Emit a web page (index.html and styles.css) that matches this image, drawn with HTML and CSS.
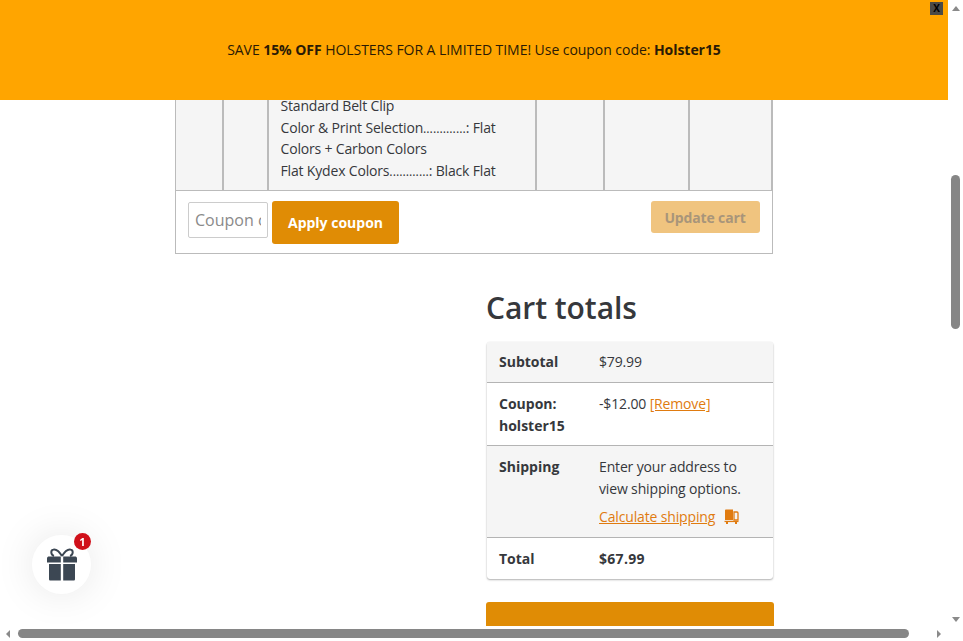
FILE: index.html
```html
<!DOCTYPE html>
<html lang="en">
<head>
    <meta charset="UTF-8">
    <meta name="viewport" content="width=device-width, initial-scale=1.0">
    <title>Cart</title>
    <link rel="stylesheet" href="styles.css">
</head>
<body>
    <div class="window">
        <div class="page">
            <main class="cart">
                <table class="cart-table">
                    <tr class="item-row">
                        <td class="cell-a"></td>
                        <td class="cell-b"></td>
                        <td class="cell-desc">
                            Standard Belt Clip<br>
                            Color &amp; Print Selection<span class="dots">.............</span>: Flat<br>
                            Colors + Carbon Colors<br>
                            Flat Kydex Colors<span class="dots">............</span>: Black Flat
                        </td>
                        <td class="cell-c"></td>
                        <td class="cell-d"></td>
                        <td class="cell-e"></td>
                    </tr>
                    <tr>
                        <td colspan="6" class="actions">
                            <div class="actions-row">
                                <div class="coupon">
                                    <input type="text" class="coupon-input" placeholder="Coupon code">
                                    <button class="button apply-button">Apply coupon</button>
                                </div>
                                <button class="button update-button">Update cart</button>
                            </div>
                        </td>
                    </tr>
                </table>

                <section class="totals">
                    <h2>Cart totals</h2>
                    <table class="totals-table">
                        <tr class="shaded first-row">
                            <th>Subtotal</th>
                            <td>$79.99</td>
                        </tr>
                        <tr>
                            <th>Coupon: holster15</th>
                            <td>-$12.00 <a href="#">[Remove]</a></td>
                        </tr>
                        <tr class="shaded">
                            <th>Shipping</th>
                            <td>
                                <p>Enter your address to view shipping options.</p>
                                <a href="#" class="calc-link">Calculate shipping</a>
                                <svg class="truck" width="15" height="15" viewBox="0 0 15 15">
                                    <path d="M1 1.500C1 .8 1.500.5 2 .5h7v10.500H1z" fill="#e07b10"/>
                                    <path d="M10 3h3c.6 0 1 .4 1 1v7h-4z" fill="none" stroke="#e07b10" stroke-width="1.300"/>
                                    <path d="M.5 11.800h14v1.300H.5z" fill="#e07b10"/>
                                    <path d="M2 13.100h2V15H2zM11 13.100h2V15h-2z" fill="#e07b10"/>
                                </svg>
                            </td>
                        </tr>
                        <tr>
                            <th>Total</th>
                            <td><strong>$67.99</strong></td>
                        </tr>
                    </table>
                    <a href="#" class="button checkout-button">Proceed to checkout</a>
                </section>
            </main>
        </div>

        <div class="scroll-y">
            <span class="arrow arrow-up"></span>
            <div class="scroll-y-track"><div class="scroll-y-thumb"></div></div>
            <span class="arrow arrow-down"></span>
        </div>
        <div class="scroll-x">
            <span class="arrow arrow-left"></span>
            <div class="scroll-x-track"><div class="scroll-x-thumb"></div></div>
            <span class="arrow arrow-right"></span>
        </div>
        <div class="scroll-corner"></div>
    </div>

    <div class="notice">
        <p>SAVE <b>15% OFF</b> HOLSTERS FOR A LIMITED TIME! Use coupon code: <b>Holster15</b></p>
        <button class="notice-close">X</button>
    </div>

    <div class="gift">
        <svg width="30" height="33" viewBox="0 0 30 33">
            <path d="M15 8C12 3 9 1 6.500 1.500 3.500 2 3.500 7 7 8M15 8c3-5 6-7 8.500-6.500 3 .5 3 5.500-.5 6.500" fill="none" stroke="#3c4753" stroke-width="2"/>
            <path d="M0 10.500C0 9 1 8.500 2 8.500h11.800v6H0zM16.200 8.500H28c1 0 2 .5 2 2v4H16.200z" fill="#3c4753"/>
            <path d="M2 16h11.800v16.500H3.500C2.500 32.500 2 32 2 31zM16.200 16H28v15c0 1-.5 1.500-1.500 1.500H16.200z" fill="#3c4753"/>
        </svg>
        <span class="gift-badge">1</span>
    </div>
</body>
</html>
```

FILE: styles.css
```css
* {
    box-sizing: border-box;
}

html, body {
    height: 100%;
}

body {
    margin: 0;
    overflow: hidden;
    background-color: #fff;
    color: #36383c;
    font-family: "Open Sans", "Noto Sans", sans-serif;
    font-size: 14px;
    line-height: 21.6px;
}

.window {
    display: grid;
    grid-template-columns: 948px 15px;
    grid-template-rows: 626px 15px;
    height: 100%;
}

.page {
    overflow: hidden;
}

.cart {
    width: 598px;
    margin: 0 auto;
    padding-top: 94px;
}

/* cart table */
.cart-table {
    width: 100%;
    border-collapse: collapse;
    border: 1px solid #bbb;
    table-layout: fixed;
}

.cart-table td {
    padding: 0;
    border: 1px solid #bbb;
}

.item-row td {
    background-color: #f5f5f5;
    border-top: none;
    border-right-width: 2px;
    vertical-align: top;
}

.cell-a { width: 47px; }
.cell-b { width: 45px; }
.cell-c { width: 68px; }
.cell-d { width: 85px; }
.cell-e { width: 83px; }

.item-row .cell-desc {
    padding: 0 12px 9px 12px;
    letter-spacing: -0.17px;
}

.dots {
    font-size: 12.5px;
    line-height: 1;
    letter-spacing: 0;
}

.actions {
    padding: 10px 12px 9px !important;
}

.actions-row {
    display: flex;
    justify-content: space-between;
    align-items: flex-start;
}

.coupon {
    display: flex;
    align-items: flex-start;
    gap: 4px;
}

.coupon-input {
    width: 80px;
    height: 36px;
    margin-top: 1px;
    padding: 0 6px;
    border: 1px solid #ccc;
    border-radius: 2px;
    font-family: inherit;
    font-size: 16px;
    color: #36383c;
}

.coupon-input::placeholder {
    color: #8a8a8a;
}

.button {
    display: block;
    border: none;
    border-radius: 3px;
    background-color: #e08c05;
    color: #fff;
    font-family: inherit;
    font-size: 14px;
    font-weight: 700;
    text-decoration: none;
    text-align: center;
}

.apply-button {
    width: 127px;
    height: 43px;
}

.update-button {
    width: 109px;
    height: 32px;
    background-color: #f0c47f;
    color: #a8957a;
    letter-spacing: -0.15px;
}

/* totals */
.totals {
    width: 288px;
    margin-left: auto;
    margin-right: -1px;
    margin-top: 32px;
}

.totals h2 {
    margin: 0 0 12px;
    font-size: 30px;
    line-height: 44px;
    font-weight: 600;
    letter-spacing: -0.05px;
    color: #36383c;
}

.totals-table {
    width: 286px;
    margin-left: 1px;
    border-collapse: collapse;
    border-radius: 3px;
    box-shadow: 0 1px 2px rgba(0, 0, 0, 0.3), 0 0 1px rgba(0, 0, 0, 0.15);
}

.totals-table tr {
    border-bottom: 1px solid #b4b4b4;
}

.totals-table tr:last-child {
    border-bottom: none;
}

.totals-table th,
.totals-table td {
    padding: 10px 12px 9px;
    text-align: left;
    vertical-align: top;
}

.first-row th,
.first-row td {
    padding: 9px 12px;
}

.totals-table th {
    width: 100px;
    font-weight: 700;
}

.totals-table td {
    letter-spacing: -0.15px;
}

.totals-table strong {
    letter-spacing: 0.3px;
}

.totals-table td p {
    margin: 0 0 7px;
}

.shaded {
    background-color: #f5f5f5;
}

.totals-table a {
    color: #e07b10;
}

.truck {
    margin-left: 5px;
    vertical-align: -2px;
}

.checkout-button {
    height: 60px;
    margin-top: 23px;
    font-size: 18px;
    line-height: 63px;
}

/* scrollbars */
.scroll-y {
    display: flex;
    flex-direction: column;
    align-items: center;
    background-color: #fff;
}

.scroll-y-track {
    flex: 1;
    width: 9px;
    padding-top: 160px;
}

.scroll-y-thumb {
    height: 154px;
    border-radius: 5px;
    background-color: #868686;
}

.scroll-x {
    display: flex;
    align-items: center;
    background-color: #fff;
}

.scroll-x-track {
    flex: 1;
    height: 9px;
    padding: 0 24px 0 4px;
}

.scroll-x-thumb {
    height: 9px;
    border-radius: 5px;
    background-color: #868686;
}

.arrow {
    width: 0;
    height: 0;
    flex: none;
    border-style: solid;
    border-color: transparent;
}

.arrow-up {
    margin: 6px 0 4px;
    border-width: 0 4.5px 5px;
    border-bottom-color: #8a8a8a;
}

.arrow-down {
    margin: 4px 0;
    border-width: 5px 4.5px 0;
    border-top-color: #8a8a8a;
}

.arrow-left {
    margin: 0 4px 0 6px;
    border-width: 4px 4px 4px 0;
    border-right-color: #8a8a8a;
}

.arrow-right {
    margin: 0 7px 0 4px;
    border-width: 4px 0 4px 4px;
    border-left-color: #8a8a8a;
}

.scroll-corner {
    background-color: #fff;
}

/* overlays */
.notice {
    position: fixed;
    top: 0;
    left: 0;
    width: 948px;
    height: 100px;
    display: flex;
    align-items: center;
    justify-content: center;
    background-color: #ffa500;
    color: #2a1a05;
    letter-spacing: -0.05px;
}

.notice p {
    margin: 0;
}

.notice-close {
    position: absolute;
    top: 2px;
    right: 5px;
    width: 13px;
    height: 13px;
    padding: 0;
    border: none;
    background-color: #4a4a48;
    color: #000;
    font-family: inherit;
    font-size: 10px;
    font-weight: 700;
    line-height: 13px;
}

.gift {
    position: fixed;
    left: 32px;
    top: 535px;
    width: 59px;
    height: 59px;
    display: flex;
    align-items: center;
    justify-content: center;
    border-radius: 50%;
    background-color: #fff;
    box-shadow: 0 0 40px rgba(0, 0, 0, 0.1);
}

.gift-badge {
    position: absolute;
    top: -2px;
    right: 0;
    width: 17px;
    height: 17px;
    border-radius: 50%;
    background-color: #d0101a;
    color: #fff;
    font-size: 11px;
    font-weight: 700;
    line-height: 17px;
    text-align: center;
}
```
